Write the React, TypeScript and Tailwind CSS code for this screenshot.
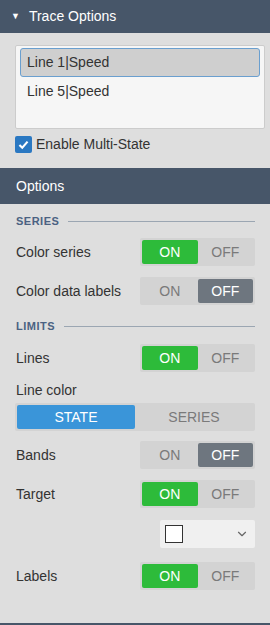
import { ChevronDown } from "lucide-react"

type ToggleProps = { on: boolean }

function Toggle({ on }: ToggleProps) {
    return (
        <div className="flex h-[28px] w-[115px] rounded-[2px] bg-[#d3d3d3] p-[2px]">
            <div className={`flex flex-1 items-center justify-center rounded-[2px] text-[14px] ${on ? "bg-[#2dbb3a] text-white" : "text-[#7a7a7a]"}`}>
                ON
            </div>
            <div className={`flex flex-1 items-center justify-center rounded-[2px] text-[14px] ${!on ? "bg-[#6e767f] text-white" : "text-[#7a7a7a]"}`}>
                OFF
            </div>
        </div>
    )
}

function SectionTitle({ label, className = "" }: { label: string; className?: string }) {
    return (
        <div className={`flex h-[20px] items-center gap-[9px] ${className}`}>
            <span className="text-[11px] font-bold tracking-[0.5px] text-[#4b6282]">{label}</span>
            <div className="h-px flex-1 bg-[#9ba6b2]"></div>
        </div>
    )
}

function ToggleRow({ label, on, className = "" }: { label: string; on: boolean; className?: string }) {
    return (
        <div className={`flex h-[28px] items-center justify-between ${className}`}>
            <span className="text-[14px] text-[#333]">{label}</span>
            <Toggle on={on} />
        </div>
    )
}

export default function App() {
    return (
        <div className="flex h-[625px] w-[270px] flex-col bg-[#dedede] font-['Liberation_Sans',Arial,sans-serif]">
            {/* Trace options */}
            <div className="flex h-[33px] items-center bg-[#475669] pl-[11px] text-[14px] text-white">
                <span className="mr-[9px] text-[9px]">▼</span>
                <span>Trace Options</span>
            </div>
            <div className="h-[135px] pl-[15px] pr-[5px] pt-[12px]">
                <div className="h-[84px] rounded-[2px] border border-[#cccccc] bg-[#f6f6f6] px-[4px] pt-[2px]">
                    <div className="flex h-[29px] items-center rounded-[3px] border border-[#6a9fcf] bg-[#cfcfcf] pl-[6px] text-[14px] text-[#333]">
                        Line 1|Speed
                    </div>
                    <div className="flex h-[29px] items-center pl-[7px] text-[14px] text-[#333]">
                        Line 5|Speed
                    </div>
                </div>
                <div className="mt-[6px] flex h-[18px] items-center gap-[4px]">
                    <div className="flex h-[17px] w-[17px] items-center justify-center rounded-[2px] bg-[#2a78c2]">
                        <svg viewBox="0 0 16 16" className="h-[13px] w-[13px]">
                            <path d="M3 8.5 L6.5 12 L13 4.5" fill="none" stroke="white" strokeWidth="2.6" />
                        </svg>
                    </div>
                    <span className="text-[14px] text-[#333]">Enable Multi-State</span>
                </div>
            </div>

            {/* Options */}
            <div className="flex h-[36px] items-center bg-[#475669] pl-[16px] text-[14px] text-white">
                Options
            </div>
            <div className="flex flex-1 flex-col pl-[16px] pr-[15px]">
                <SectionTitle label="SERIES" className="mt-[7px]" />
                <ToggleRow label="Color series" on={true} className="mt-[7px]" />
                <ToggleRow label="Color data labels" on={false} className="mt-[11px]" />
                <SectionTitle label="LIMITS" className="mt-[11px]" />
                <ToggleRow label="Lines" on={true} className="mt-[8px]" />
                <div className="mt-[8px] flex h-[20px] items-center text-[14px] text-[#333]">Line color</div>
                <div className="-ml-[1px] mt-[3px] flex h-[28px] rounded-[2px] bg-[#d3d3d3] p-[2px]">
                    <div className="flex w-[118px] items-center justify-center rounded-[2px] bg-[#3a95d9] text-[14px] text-white">
                        STATE
                    </div>
                    <div className="flex flex-1 items-center justify-center text-[14px] text-[#7a7a7a]">SERIES</div>
                </div>
                <ToggleRow label="Bands" on={false} className="mt-[10px]" />
                <ToggleRow label="Target" on={true} className="mt-[11px]" />
                <div className="mt-[12px] flex justify-end">
                    <div className="flex h-[28px] w-[95px] items-center justify-between rounded-[2px] bg-[#f0f0f0] pl-[5px] pr-[6px]">
                        <div className="h-[18px] w-[18px] border border-[#333] bg-white"></div>
                        <ChevronDown className="h-[14px] w-[14px] text-[#666]" strokeWidth={2} />
                    </div>
                </div>
                <ToggleRow label="Labels" on={true} className="mt-[14px]" />
            </div>
            <div className="h-[2px] bg-[#475669]"></div>
        </div>
    )
}
